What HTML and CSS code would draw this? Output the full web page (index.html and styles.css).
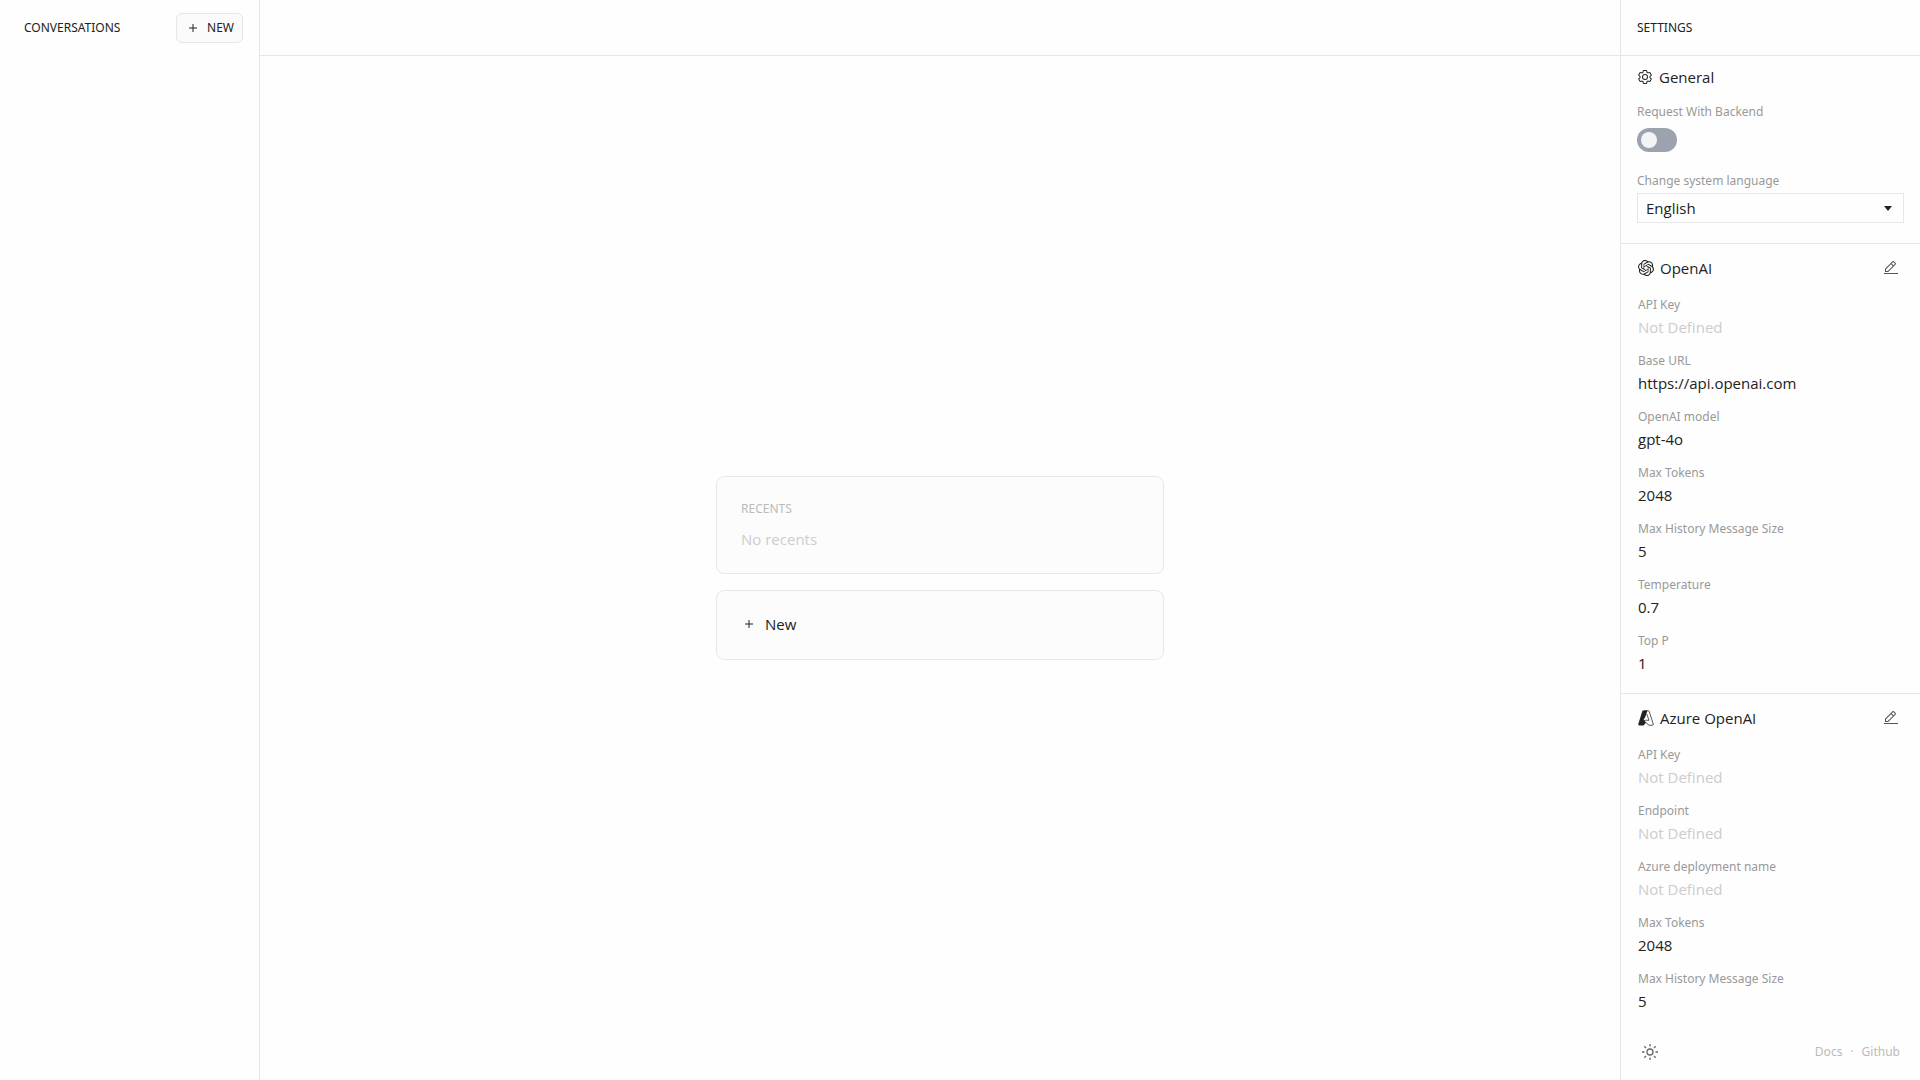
FILE: index.html
```html
<!DOCTYPE html>
<html lang="en">
<head>
    <meta charset="UTF-8">
    <meta name="viewport" content="width=device-width, initial-scale=1">
    <title>Conversations</title>
    <link rel="stylesheet" href="styles.css">
</head>
<body>
<svg class="sprite" aria-hidden="true">
    <symbol id="icon-add" viewBox="0 0 32 32">
        <path d="M17 15V8h-2v7H8v2h7v7h2v-7h7v-2z"/>
    </symbol>
    <symbol id="icon-edit" viewBox="0 0 32 32">
        <path d="M2 26h28v2H2zM25.4 9c.8-.8.8-2 0-2.8l-3.6-3.6c-.8-.8-2-.8-2.8 0l-15 15V24h6.4l15-15zm-5-5L24 7.6l-3 3L17.4 7l3-3zM6 22v-3.6l10-10l3.6 3.6l-10 10H6z"/>
    </symbol>
</svg>

<div class="app">
    <aside class="conversations">
        <header class="bar">
            <h2 class="title">CONVERSATIONS</h2>
            <button type="button" class="new-btn">
                <svg class="icon"><use href="#icon-add"/></svg>
                NEW
            </button>
        </header>
    </aside>

    <main class="main">
        <header class="bar line"></header>
        <div class="welcome">
            <section class="card">
                <h3 class="card-title">RECENTS</h3>
                <p class="empty">No recents</p>
            </section>
            <button type="button" class="card card-new">
                <svg class="icon"><use href="#icon-add"/></svg>
                New
            </button>
        </div>
    </main>

    <aside class="settings">
        <header class="bar line">
            <h2 class="title">SETTINGS</h2>
        </header>

        <div class="settings-list">
            <section class="general">
                <h3 class="group-title">
                    <svg class="icon" viewBox="0 0 32 32"><path d="M27 16.76v-1.53l1.92-1.68A2 2 0 0 0 29.3 11l-2.36-4a2 2 0 0 0-1.73-1 2 2 0 0 0-.64.1l-2.43.82a11.35 11.35 0 0 0-1.31-.75l-.51-2.52a2 2 0 0 0-2-1.61h-4.68a2 2 0 0 0-2 1.61l-.51 2.52a11.48 11.48 0 0 0-1.32.75l-2.38-.86A2 2 0 0 0 6.79 6a2 2 0 0 0-1.73 1L2.7 11a2 2 0 0 0 .41 2.51L5 15.24v1.53l-1.89 1.68A2 2 0 0 0 2.7 21l2.36 4a2 2 0 0 0 1.73 1 2 2 0 0 0 .64-.1l2.43-.82a11.35 11.35 0 0 0 1.31.75l.51 2.52a2 2 0 0 0 2 1.61h4.72a2 2 0 0 0 2-1.61l.51-2.52a11.48 11.48 0 0 0 1.32-.75l2.42.82a2 2 0 0 0 .64.1 2 2 0 0 0 1.73-1l2.28-4a2 2 0 0 0-.41-2.51ZM25.21 24l-3.43-1.16a8.86 8.86 0 0 1-2.71 1.57L18.36 28h-4.72l-.71-3.55a9.36 9.36 0 0 1-2.7-1.57L6.79 24l-2.36-4 2.72-2.4a8.9 8.9 0 0 1 0-3.13L4.43 12l2.36-4 3.43 1.16a8.86 8.86 0 0 1 2.71-1.57L13.64 4h4.72l.71 3.55a9.36 9.36 0 0 1 2.7 1.57L25.21 8l2.36 4-2.72 2.4a8.9 8.9 0 0 1 0 3.13L27.57 20ZM16 22a6 6 0 1 1 6-6 5.94 5.94 0 0 1-6 6m0-10a3.91 3.91 0 0 0-4 4 3.91 3.91 0 0 0 4 4 3.91 3.91 0 0 0 4-4 3.91 3.91 0 0 0-4-4"/></svg>
                    General
                </h3>
                <div class="control">
                    <label for="backend">Request With Backend</label>
                    <input type="checkbox" id="backend" class="toggle">
                </div>
                <div class="control">
                    <label for="language">Change system language</label>
                    <div class="select">
                        <select id="language">
                            <option>English</option>
                        </select>
                    </div>
                </div>
            </section>

            <section class="provider">
                <div class="provider-head">
                    <h3 class="group-title">
                        <svg class="icon" viewBox="0 0 24 24"><path d="M22.2819 9.8211a5.9847 5.9847 0 0 0-.5157-4.9108 6.0462 6.0462 0 0 0-6.5098-2.9A6.0651 6.0651 0 0 0 4.9807 4.1818a5.9847 5.9847 0 0 0-3.9977 2.9 6.0462 6.0462 0 0 0 .7427 7.0966 5.98 5.98 0 0 0 .511 4.9107 6.051 6.051 0 0 0 6.5146 2.9001A5.9847 5.9847 0 0 0 13.2599 24a6.0557 6.0557 0 0 0 5.7718-4.2058 5.9894 5.9894 0 0 0 3.9977-2.9001 6.0557 6.0557 0 0 0-.7475-7.0729zm-9.022 12.6081a4.4755 4.4755 0 0 1-2.8764-1.0408l.1419-.0804 4.7783-2.7582a.7948.7948 0 0 0 .3927-.6813v-6.7369l2.02 1.1686a.071.071 0 0 1 .038.052v5.5826a4.504 4.504 0 0 1-4.4945 4.4944zm-9.6607-4.1254a4.4708 4.4708 0 0 1-.5346-3.0137l.142.0852 4.783 2.7582a.7712.7712 0 0 0 .7806 0l5.8428-3.3685v2.3324a.0804.0804 0 0 1-.0332.0615L9.74 19.9502a4.4992 4.4992 0 0 1-6.1408-1.6464zM2.3408 7.8956a4.485 4.485 0 0 1 2.3655-1.9728V11.6a.7664.7664 0 0 0 .3879.6765l5.8144 3.3543-2.0201 1.1685a.0757.0757 0 0 1-.071 0l-4.8303-2.7865A4.504 4.504 0 0 1 2.3408 7.872zm16.5963 3.8558L13.1038 8.364 15.1192 7.2a.0757.0757 0 0 1 .071 0l4.8303 2.7913a4.4944 4.4944 0 0 1-.6765 8.1042v-5.6772a.79.79 0 0 0-.407-.667zm2.0107-3.0231l-.142-.0852-4.7735-2.7818a.7759.7759 0 0 0-.7854 0L9.409 9.2297V6.8974a.0662.0662 0 0 1 .0284-.0615l4.8303-2.7866a4.4992 4.4992 0 0 1 6.6802 4.66zM8.3065 12.863l-2.02-1.1638a.0804.0804 0 0 1-.038-.0567V6.0742a4.4992 4.4992 0 0 1 7.3757-3.4537l-.142.0805L8.704 5.459a.7948.7948 0 0 0-.3927.6813zm1.0976-2.3654l2.602-1.4998 2.6069 1.4998v2.9994l-2.5974 1.4997-2.6067-1.4997Z"/></svg>
                        OpenAI
                    </h3>
                    <button type="button" class="icon-btn" aria-label="Edit OpenAI">
                        <svg class="icon"><use href="#icon-edit"/></svg>
                    </button>
                </div>
                <dl class="fields">
                    <div><dt>API Key</dt><dd class="empty">Not Defined</dd></div>
                    <div><dt>Base URL</dt><dd>https://api.openai.com</dd></div>
                    <div><dt>OpenAI model</dt><dd>gpt-4o</dd></div>
                    <div><dt>Max Tokens</dt><dd>2048</dd></div>
                    <div><dt>Max History Message Size</dt><dd>5</dd></div>
                    <div><dt>Temperature</dt><dd>0.7</dd></div>
                    <div><dt>Top P</dt><dd>1</dd></div>
                </dl>
            </section>

            <section class="provider">
                <div class="provider-head">
                    <h3 class="group-title">
                        <svg class="icon" viewBox="0 0 32 32">
                            <path d="M10 1h9l-4.500 13L11 20l5 5-4 5q-1 1-3 1H2.500Q0 30.500.6 28L8.500 2.500Q9 1 10 1z"/>
                            <path class="stroke" d="M12 1.500h8.500q1.500 0 2 1.500l8 25q.5 2.500-2 2.500H22L11.500 21.500l3.500-1h7L17.500 8"/>
                        </svg>
                        Azure OpenAI
                    </h3>
                    <button type="button" class="icon-btn" aria-label="Edit Azure OpenAI">
                        <svg class="icon"><use href="#icon-edit"/></svg>
                    </button>
                </div>
                <dl class="fields">
                    <div><dt>API Key</dt><dd class="empty">Not Defined</dd></div>
                    <div><dt>Endpoint</dt><dd class="empty">Not Defined</dd></div>
                    <div><dt>Azure deployment name</dt><dd class="empty">Not Defined</dd></div>
                    <div><dt>Max Tokens</dt><dd>2048</dd></div>
                    <div><dt>Max History Message Size</dt><dd>5</dd></div>
                </dl>
            </section>
        </div>

        <footer class="footer">
            <button type="button" class="icon-btn" aria-label="Toggle theme">
                <svg class="icon sun" viewBox="0 0 18 18">
                    <circle cx="9" cy="9" r="3"/>
                    <path d="M9 1v2.500M9 14.500V17M1 9h2.500M14.500 9H17M3.300 3.300l1.800 1.800M12.900 12.900l1.800 1.800M3.300 14.700l1.800-1.800M12.900 5.100l1.800-1.800"/>
                </svg>
            </button>
            <nav class="links">
                <a href="#docs">Docs</a>
                <span>·</span>
                <a href="#github">Github</a>
            </nav>
        </footer>
    </aside>
</div>
</body>
</html>
```
FILE: styles.css
```css
* {
    box-sizing: border-box;
    margin: 0;
    padding: 0;
}

body {
    font-family: "Open Sans", "Noto Sans", sans-serif;
    font-size: 15px;
    line-height: 24px;
    color: #222;
    background: #fefefe;
}

button, select {
    font: inherit;
    color: inherit;
    background: none;
    border: 0;
    cursor: pointer;
}

h2, h3 {
    font-weight: normal;
}

.sprite {
    display: none;
}

.icon {
    width: 16px;
    height: 16px;
    fill: currentColor;
    flex-shrink: 0;
}

.app {
    display: grid;
    grid-template-columns: 260px 1fr 300px;
    height: 100vh;
}

.bar {
    display: flex;
    align-items: center;
    justify-content: space-between;
    height: 56px;
    padding: 0 16px;
    flex-shrink: 0;
}

.line {
    border-bottom: 1px solid #e6e6e6;
}

/* small text */
.title, .new-btn, .card-title, .control label, dt, .links {
    font-family: "Noto Sans", sans-serif;
    font-size: 12px;
}

/* left */
.conversations {
    border-right: 1px solid #e6e6e6;
}

.conversations .bar {
    padding-left: 24px;
}

.new-btn {
    display: flex;
    align-items: center;
    gap: 6px;
    height: 30px;
    padding: 0 8px;
    background: #fbfbfb;
    border: 1px solid #e6e6e6;
    border-radius: 6px;
}

/* center */
.main {
    display: flex;
    flex-direction: column;
}

.welcome {
    flex: 1;
    display: flex;
    flex-direction: column;
    align-items: center;
    justify-content: center;
    gap: 16px;
}

.card {
    width: 100%;
    max-width: 448px;
    padding: 20px 24px 22px;
    background: #fcfcfc;
    border: 1px solid #e8e8e8;
    border-radius: 8px;
}

.card-title {
    margin-bottom: 6px;
    color: #bbb;
}

.card-new {
    display: flex;
    align-items: center;
    gap: 8px;
    padding: 21px 24px 23px;
}

.empty {
    color: #ccc;
}

/* right */
.settings {
    display: flex;
    flex-direction: column;
    min-height: 0;
    border-left: 1px solid #e6e6e6;
}

.settings-list {
    flex: 1;
    min-height: 0;
    overflow-y: auto;
    scrollbar-width: none;
}

.group-title {
    display: flex;
    align-items: center;
    gap: 6px;
    font-size: 15px;
}

.general {
    display: flex;
    flex-direction: column;
    padding: 9px 16px 20px;
}

.control {
    display: flex;
    flex-direction: column;
    align-items: flex-start;
    margin-top: 12px;
}

.control + .control {
    margin-top: 18px;
}

.control label, dt {
    line-height: 22px;
    color: #999;
}

dd {
    line-height: 22px;
}

.toggle {
    appearance: none;
    width: 40px;
    height: 24px;
    margin-top: 5px;
    padding: 4px;
    background: #9ca3af;
    border-radius: 12px;
    cursor: pointer;
}

.toggle::before {
    content: "";
    display: block;
    width: 16px;
    height: 16px;
    background: #f3f4f6;
    border-radius: 50%;
}

.toggle:checked::before {
    margin-left: auto;
}

.select {
    display: flex;
    align-items: center;
    width: 100%;
    height: 30px;
    margin-top: 1px;
    padding-right: 11px;
    border: 1px solid #e5e7eb;
}

.select select {
    flex: 1;
    height: 100%;
    padding-left: 8px;
    appearance: none;
}

.select::after {
    content: "";
    border: 4px solid transparent;
    border-top: 5px solid #222;
    border-bottom: 0;
    pointer-events: none;
}

.provider {
    padding: 12px 17px 19px;
    border-top: 1px solid #e6e6e6;
}

.provider-head {
    display: flex;
    align-items: center;
    justify-content: space-between;
    margin-bottom: 14px;
}

.provider .icon-btn {
    margin-right: 4px;
}

.icon-btn {
    display: flex;
    color: #555;
}

.stroke {
    fill: none;
    stroke: currentColor;
    stroke-width: 1.5;
}

.fields {
    display: flex;
    flex-direction: column;
    gap: 12px;
}

.footer {
    display: flex;
    align-items: center;
    justify-content: space-between;
    height: 56px;
    padding: 0 20px;
    flex-shrink: 0;
}

.sun {
    width: 18px;
    height: 18px;
    fill: none;
    stroke: #666;
    stroke-width: 1.3;
}

.links {
    display: flex;
    gap: 8px;
    color: #bbb;
}

.links a {
    color: inherit;
    text-decoration: none;
}
```
